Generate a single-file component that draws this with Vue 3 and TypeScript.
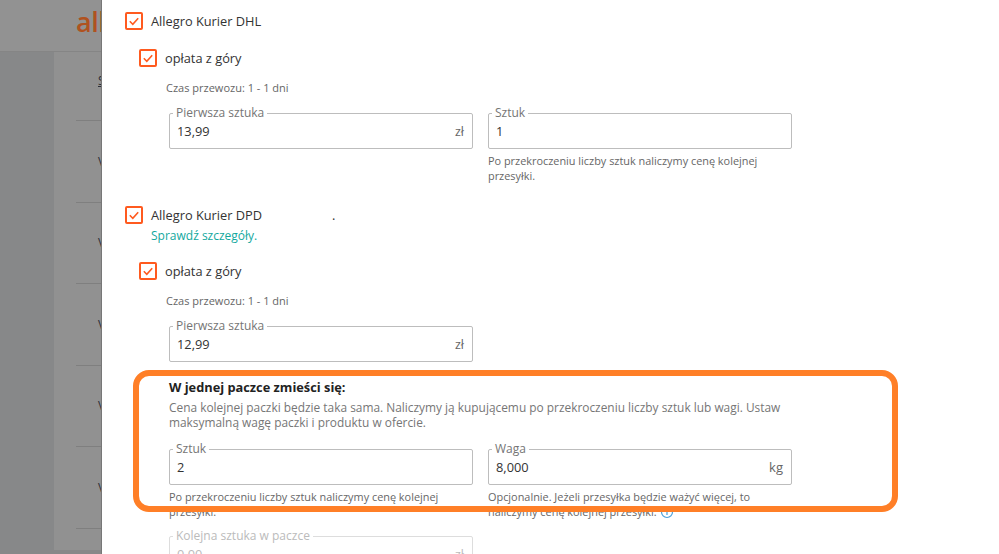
<script setup lang="ts">
const rows: string[] = ['V', 'V', 'V', 'V', 'V'];
</script>

<template>
  <div class="page">
    <aside class="backdrop">
      <header class="top"><span class="logo">all</span></header>
      <div class="under">
        <div class="side"></div>
        <div class="list">
          <div class="row first"><span class="s">S</span></div>
          <div v-for="(r, i) in rows" :key="i" class="row"><span>{{ r }}</span></div>
        </div>
      </div>
    </aside>

    <main class="panel">
      <label class="check main"><span class="box"><svg viewBox="0 0 18 18"><path d="M4.8 9.3 7.8 12.3 13.2 6.3" /></svg></span>Allegro Kurier DHL</label>
      <label class="check sub"><span class="box"><svg viewBox="0 0 18 18"><path d="M4.8 9.3 7.8 12.3 13.2 6.3" /></svg></span>opłata z góry</label>
      <p class="time">Czas przewozu: 1 - 1 dni</p>
      <div class="fields">
        <div class="col">
          <div class="field"><span class="legend">Pierwsza sztuka</span><span class="val">13,99</span><span class="unit">zł</span></div>
        </div>
        <div class="col">
          <div class="field"><span class="legend">Sztuk</span><span class="val">1</span></div>
          <p class="help">Po przekroczeniu liczby sztuk naliczymy cenę kolejnej przesyłki.</p>
        </div>
      </div>

      <label class="check main second"><span class="box"><svg viewBox="0 0 18 18"><path d="M4.8 9.3 7.8 12.3 13.2 6.3" /></svg></span>Allegro Kurier DPD<span class="dot">.</span></label>
      <a class="details">Sprawdź szczegóły.</a>
      <label class="check sub sub2"><span class="box"><svg viewBox="0 0 18 18"><path d="M4.8 9.3 7.8 12.3 13.2 6.3" /></svg></span>opłata z góry</label>
      <p class="time">Czas przewozu: 1 - 1 dni</p>
      <div class="fields">
        <div class="col">
          <div class="field"><span class="legend">Pierwsza sztuka</span><span class="val">12,99</span><span class="unit">zł</span></div>
        </div>
      </div>

      <h3 class="heading">W jednej paczce zmieści się:</h3>
      <p class="desc">Cena kolejnej paczki będzie taka sama. Naliczymy ją kupującemu po przekroczeniu liczby sztuk lub wagi. Ustaw maksymalną wagę paczki i produktu w ofercie.</p>
      <div class="fields tight">
        <div class="col">
          <div class="field"><span class="legend">Sztuk</span><span class="val">2</span></div>
          <p class="help">Po przekroczeniu liczby sztuk naliczymy cenę kolejnej przesyłki.</p>
        </div>
        <div class="col">
          <div class="field"><span class="legend">Waga</span><span class="val">8,000</span><span class="unit kg">kg</span></div>
          <p class="help">Opcjonalnie. Jeżeli przesyłka będzie ważyć więcej, to naliczymy cenę kolejnej przesyłki.<svg class="info" viewBox="0 0 14 14"><circle cx="7" cy="7" r="5.5" /><path d="M7 6.2V10M7 4v1" /></svg></p>
        </div>
      </div>
      <div class="fields next">
        <div class="col">
          <div class="field disabled"><span class="legend">Kolejna sztuka w paczce</span><span class="val">0,00</span><span class="unit">zł</span></div>
        </div>
      </div>
    </main>

    <div class="highlight"></div>
  </div>
</template>

<style>
html, body { margin: 0; overflow: hidden; }
</style>

<style scoped>
.page {
  position: relative;
  display: flex;
  width: 999px;
  height: 554px;
  overflow: hidden;
  background: #fff;
  font-family: "Open Sans", "Noto Sans", sans-serif;
  color: #333;
}
.backdrop {
  width: 102px;
  flex: none;
  box-sizing: border-box;
  display: flex;
  flex-direction: column;
  overflow: hidden;
  background: #878889;
  border-right: 1px solid #777;
}
.top {
  height: 52px;
  flex: none;
  box-sizing: border-box;
  background: #929292;
  border-bottom: 1px solid #858585;
  padding-left: 76px;
  white-space: nowrap;
}
.logo {
  display: block;
  font-size: 27px;
  font-weight: 600;
  line-height: 44px;
  color: #b0521f;
  letter-spacing: -0.5px;
}
.under { display: flex; flex: 1; }
.side { width: 54px; flex: none; background: #878889; }
.list {
  flex: 1;
  height: 498px;
  background: #919191;
  padding-left: 22px;
  white-space: nowrap;
  overflow: hidden;
}
.row {
  height: 81.5px;
  box-sizing: border-box;
  border-bottom: 1px solid #7f7f7f;
  display: flex;
  align-items: center;
  padding-left: 22px;
  font-size: 12px;
  color: #2c2f38;
}
.row.first { height: 69px; padding-bottom: 12px; }
.row.first .s { text-decoration: underline; }

.panel {
  flex: 1;
  padding: 12px 0 0 23px;
  min-width: 0;
}
.check {
  display: flex;
  align-items: center;
  gap: 8px;
  font-size: 12.8px;
  line-height: 18px;
  color: #333;
}
.check.sub { margin: 19px 0 0 14px; }
.check.second { margin-top: 23px; }
.check.sub2 { margin-top: 19px; }
.box {
  width: 18px;
  height: 18px;
  flex: none;
  box-sizing: border-box;
  border: 2px solid #ff5a1f;
  border-radius: 2px;
  background: #fff;
  display: flex;
  align-items: center;
  justify-content: center;
}
.box svg { width: 18px; height: 18px; flex: none; }
.box path { fill: none; stroke: #ff5a1f; stroke-width: 1.6; }
.dot { margin-left: 62px; }
.details {
  display: block;
  margin: 4px 0 0 26px;
  font-size: 12px;
  line-height: 15px;
  color: #13a89e;
}
.time {
  margin: 13px 0 0 41px;
  font-size: 11px;
  line-height: 15px;
  color: #666;
}
.fields {
  display: flex;
  gap: 15px;
  margin: 18px 0 0 44px;
}
.fields.tight { margin-top: 19px; }
.fields.next { margin-top: 17px; }
.col { width: 304px; flex: none; }
.field {
  position: relative;
  height: 36px;
  box-sizing: border-box;
  border: 1px solid #bdbdbd;
  border-radius: 2px;
  display: flex;
  align-items: center;
  justify-content: space-between;
  padding: 0 8px 0 7px;
  font-size: 12.8px;
  color: #333;
}
.legend {
  position: absolute;
  left: 3px;
  top: -9px;
  padding: 0 3px;
  background: #fff;
  font-size: 12px;
  line-height: 16px;
  color: #757575;
  white-space: nowrap;
}
.unit { font-size: 12.5px; color: #666; }
.unit.kg { font-size: 13px; }
.field.disabled { border-color: #ddd; color: #bbb; }
.field.disabled .legend, .field.disabled .unit { color: #bbb; }
.help {
  margin: 4px 0 0 0;
  font-size: 10.9px;
  line-height: 15px;
  color: #666;
  width: 300px;
}
.info { width: 14px; height: 14px; vertical-align: -3px; margin-left: 3px; }
.info circle, .info path { fill: none; stroke: #4a9fd8; stroke-width: 1.2; }
.heading {
  margin: 16px 0 0 44px;
  font-size: 12.8px;
  line-height: 18px;
  font-weight: 700;
  color: #222;
}
.desc {
  margin: 4px 0 0 44px;
  width: 624px;
  font-size: 11.9px;
  line-height: 15px;
  color: #767676;
}
.highlight {
  position: absolute;
  left: 133px;
  top: 370px;
  width: 765px;
  height: 142px;
  box-sizing: border-box;
  border: 6px solid #ff7f27;
  border-radius: 16px;
  pointer-events: none;
}
</style>
